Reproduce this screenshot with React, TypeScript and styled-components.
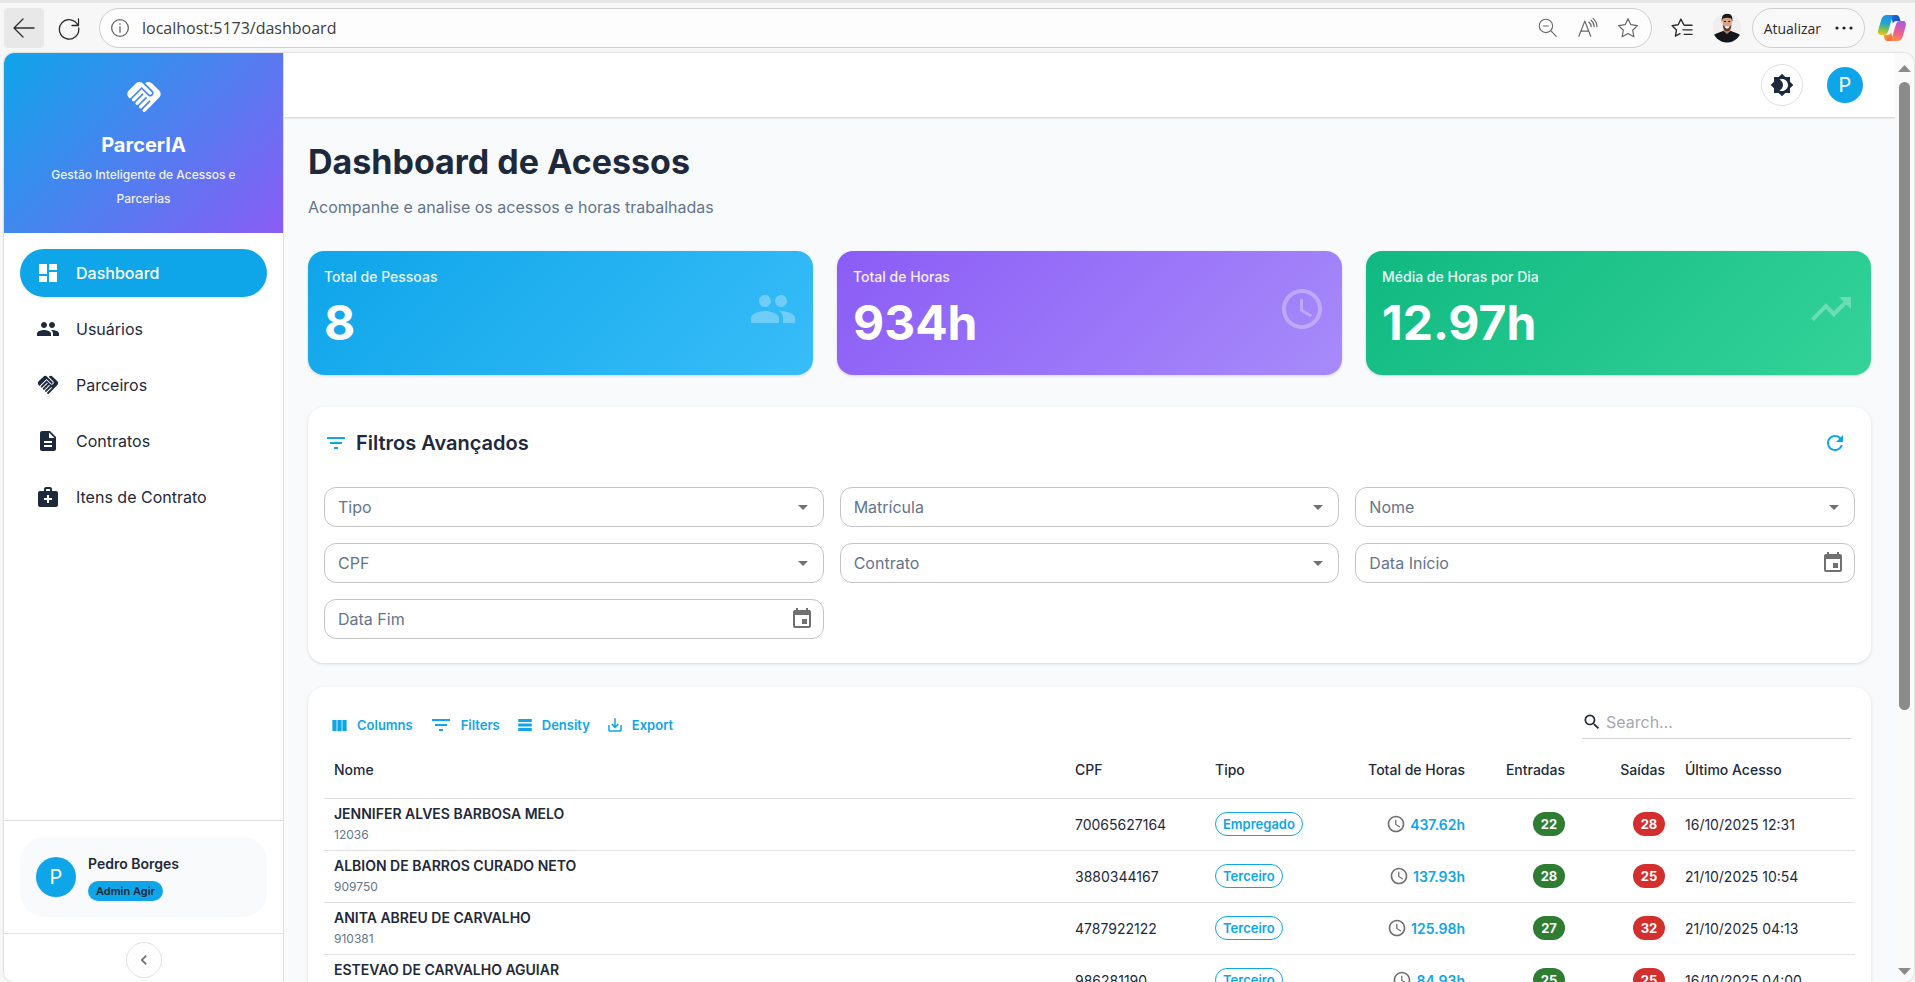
import React from 'react';
import styled, { createGlobalStyle, css } from 'styled-components';
import type { IconType } from 'react-icons';
import {
  MdAccessTime,
  MdArrowDropDown,
  MdBrightness4,
  MdChevronLeft,
  MdDashboard,
  MdDescription,
  MdEvent,
  MdFilterList,
  MdHandshake,
  MdMedicalServices,
  MdPeople,
  MdRefresh,
  MdSaveAlt,
  MdSearch,
  MdTrendingUp,
} from 'react-icons/md';

const color = {
  primary: '#0ea5e9',
  violet: '#8b5cf6',
  text: '#1e293b',
  muted: '#64748b',
  line: '#e0e0e0',
  canvas: '#f8fafc',
  chrome: '#f7f7f7',
};

const GlobalStyle = createGlobalStyle`
  *, *::before, *::after { box-sizing: border-box; }
  body {
    margin: 0;
    background: ${color.chrome};
    color: ${color.text};
    font-family: Inter, "Liberation Sans", sans-serif;
    font-size: 14px;
  }
  button, input, select { font: inherit; color: inherit; margin: 0; }
  button { cursor: pointer; }
  svg { display: block; flex: none; }
  h1, h2, p { margin: 0; }
`;

/* ---------- Browser window ---------- */

const BrowserWindow = styled.div`
  display: flex;
  flex-direction: column;
  height: 100vh;
  overflow: hidden;
`;

const BrowserBar = styled.header`
  display: flex;
  align-items: center;
  flex: none;
  height: 53px;
  padding: 0 8px 0 4px;
  border-top: 3px solid #e6e6e6;
  color: #2b2b2b;
  font-family: "Open Sans", "Noto Sans", sans-serif;
`;

const BrowserButton = styled.button<{ $active?: boolean }>`
  display: grid;
  place-items: center;
  width: 40px;
  height: 40px;
  padding: 0;
  border: 0;
  border-radius: 4px;
  background: ${(p) => (p.$active ? '#e8e8e8' : 'transparent')};
`;

const BrowserButtonGroup = styled.div`
  display: flex;
  gap: 5px;
`;

const AddressBar = styled.div`
  display: flex;
  align-items: center;
  flex: 1;
  height: 40px;
  margin: 0 10px;
  padding: 0 3px 0 10px;
  border: 1px solid #cfcfcf;
  border-radius: 20px;
  background: #fdfdfd;
  color: #666;
`;

const AddressInput = styled.input`
  flex: 1;
  min-width: 0;
  margin-left: 12px;
  padding: 0;
  border: 0;
  outline: 0;
  background: transparent;
  color: #3c3c3c;
  font-size: 16px;
`;

const UpdateButton = styled.button`
  display: flex;
  align-items: center;
  gap: 14px;
  height: 40px;
  margin: 0 12px 0 5px;
  padding: 0 11px;
  border: 1px solid #cfcfcf;
  border-radius: 20px;
  background: #f9f9f9;
  font-size: 14px;
`;

const PageFrame = styled.div`
  display: flex;
  flex: 1;
  min-height: 0;
  margin: 0 1px 0 4px;
  border-radius: 10px;
  overflow: hidden;
  background: ${color.canvas};
  box-shadow: 0 0 2px rgba(0, 0, 0, 0.3);
`;

const ScrollTrack = styled.div`
  display: flex;
  flex-direction: column;
  align-items: center;
  flex: none;
  width: 19px;
  padding: 12px 0 7px;
  background: #fafafa;
`;

const ScrollThumb = styled.div`
  width: 11px;
  height: 69%;
  margin: 10px 0 auto;
  border-radius: 6px;
  background: #8b8b8b;
`;

/* ---------- Sidebar ---------- */

const Sidebar = styled.aside`
  display: flex;
  flex-direction: column;
  flex: none;
  width: 280px;
  border-right: 1px solid ${color.line};
  background: #fff;
`;

const Brand = styled.div`
  display: flex;
  flex-direction: column;
  align-items: center;
  padding: 24px 24px 22px;
  background: linear-gradient(135deg, ${color.primary} 0%, ${color.violet} 100%);
  color: #fff;
  text-align: center;
`;

const BrandName = styled.p`
  margin: 12px 0 2px;
  font-size: 20px;
  line-height: 32px;
  font-weight: 700;
`;

const BrandTagline = styled.p`
  width: 200px;
  font-size: 12px;
  line-height: 24px;
  font-weight: 500;
  opacity: 0.9;
`;

const Nav = styled.nav`
  display: flex;
  flex-direction: column;
  flex: 1;
  gap: 8px;
  padding: 16px;
`;

const NavLink = styled.a<{ $active?: boolean }>`
  display: flex;
  align-items: center;
  gap: 16px;
  height: 48px;
  padding: 0 16px;
  border-radius: 24px;
  background: ${(p) => (p.$active ? color.primary : 'transparent')};
  color: ${(p) => (p.$active ? '#fff' : color.text)};
  font-size: 16px;
  font-weight: ${(p) => (p.$active ? 500 : 400)};
  text-decoration: none;
`;

const SidebarSection = styled.div<{ $tight?: boolean }>`
  display: flex;
  justify-content: center;
  padding: ${(p) => (p.$tight ? '8px 16px 4px' : '16px')};
  border-top: 1px solid ${color.line};
`;

const UserCard = styled.div`
  display: flex;
  align-items: center;
  flex: 1;
  gap: 12px;
  height: 80px;
  padding: 0 16px;
  border-radius: 24px;
  background: ${color.canvas};
`;

const Avatar = styled.span<{ $size: number }>`
  display: grid;
  place-items: center;
  width: ${(p) => p.$size}px;
  height: ${(p) => p.$size}px;
  border-radius: 50%;
  background: ${color.primary};
  color: #fff;
  font-size: 20px;
`;

const UserName = styled.p`
  margin-bottom: 7px;
  font-size: 14px;
  line-height: 20px;
  font-weight: 600;
`;

const RoleChip = styled.span`
  display: flex;
  align-items: center;
  width: fit-content;
  height: 20px;
  padding: 0 8px;
  border-radius: 10px;
  background: ${color.primary};
  font-size: 11px;
  font-weight: 600;
`;

const RoundButton = styled.button<{ $size: number }>`
  display: grid;
  place-items: center;
  width: ${(p) => p.$size}px;
  height: ${(p) => p.$size}px;
  padding: 0;
  border: 1px solid ${color.line};
  border-radius: 50%;
  background: #fff;
`;

/* ---------- Main area ---------- */

const Main = styled.main`
  display: flex;
  flex-direction: column;
  flex: 1;
  min-width: 0;
  overflow: hidden;
`;

const TopBar = styled.div`
  display: flex;
  align-items: center;
  justify-content: flex-end;
  flex: none;
  gap: 24px;
  height: 64px;
  padding: 0 32px;
  background: #fff;
  box-shadow: 0 1px 2px rgba(0, 0, 0, 0.18);
`;

const ProfileButton = styled.button`
  padding: 0;
  border: 0;
  background: none;
`;

const Content = styled.div`
  display: flex;
  flex-direction: column;
  padding: 24px 24px 0;
`;

const PageTitle = styled.h1`
  font-size: 34px;
  line-height: 42px;
  font-weight: 700;
`;

const PageSubtitle = styled.p`
  margin: 12px 0 32px;
  color: ${color.muted};
  font-size: 16px;
  line-height: 24px;
`;

const StatGrid = styled.section`
  display: grid;
  grid-template-columns: repeat(3, 1fr);
  gap: 24px;
  margin-bottom: 32px;
`;

const StatCard = styled.article<{ $from: string; $to: string }>`
  display: flex;
  align-items: center;
  justify-content: space-between;
  height: 124px;
  padding: 0 16px 8px;
  border-radius: 16px;
  background: linear-gradient(135deg, ${(p) => p.$from} 0%, ${(p) => p.$to} 100%);
  box-shadow: 0 1px 3px rgba(0, 0, 0, 0.14);
  color: #fff;

  svg { opacity: 0.3; }
`;

const StatLabel = styled.p`
  margin-bottom: 8px;
  font-size: 14px;
  line-height: 20px;
  font-weight: 500;
  opacity: 0.9;
`;

const StatValue = styled.p`
  font-size: 48px;
  line-height: 56px;
  font-weight: 700;
`;

const Panel = styled.section`
  margin-bottom: 24px;
  padding: 16px 16px 24px;
  border-radius: 16px;
  background: #fff;
  box-shadow: 0 1px 3px rgba(0, 0, 0, 0.14);
`;

const PanelHeader = styled.div`
  display: flex;
  align-items: center;
  justify-content: space-between;
  height: 40px;
  margin-bottom: 24px;
  color: ${color.primary};
`;

const PanelTitle = styled.h2`
  display: flex;
  align-items: center;
  gap: 8px;
  font-size: 20px;
  font-weight: 600;

  span { color: ${color.text}; }
`;

const IconButton = styled.button`
  display: grid;
  place-items: center;
  width: 40px;
  height: 40px;
  padding: 0;
  border: 0;
  background: none;
`;

const FilterGrid = styled.div`
  display: grid;
  grid-template-columns: repeat(3, 1fr);
  gap: 16px;
`;

const FieldBox = styled.div<{ $date?: boolean }>`
  display: flex;
  align-items: center;
  position: relative;
  height: 40px;

  svg {
    position: absolute;
    right: ${(p) => (p.$date ? 10 : 9)}px;
    color: #707070;
    pointer-events: none;
  }
`;

const fieldStyle = css`
  width: 100%;
  height: 40px;
  padding: 0 40px 0 13px;
  border: 1px solid #c4c4c4;
  border-radius: 12px;
  outline: 0;
  background: #fff;
  color: ${color.muted};
  font-size: 16px;
  appearance: none;
`;

const SelectField = styled.select`${fieldStyle}`;

const DateField = styled.input`
  ${fieldStyle}
  &::placeholder { color: ${color.muted}; opacity: 1; }
`;

/* ---------- Data grid ---------- */

const GridToolbar = styled.div`
  display: flex;
  align-items: flex-start;
  justify-content: space-between;
  padding-right: 4px;
`;

const ToolGroup = styled.div`
  display: flex;
  gap: 4px;
  padding: 6px 0 1px;
`;

const ToolButton = styled.button`
  display: flex;
  align-items: center;
  gap: 8px;
  height: 32px;
  padding: 0 6px;
  border: 0;
  background: none;
  color: ${color.primary};
  font-size: 13px;
  font-weight: 600;
`;

const SearchBox = styled.label`
  display: flex;
  align-items: center;
  gap: 4px;
  width: 269px;
  height: 36px;
  padding-top: 2px;
  border-bottom: 1px solid #d4d4d4;
`;

const SearchInput = styled.input`
  flex: 1;
  min-width: 0;
  padding: 0;
  border: 0;
  outline: 0;
  background: none;
  font-size: 16px;

  &::placeholder { color: #a5a8ad; opacity: 1; }
`;

const Table = styled.table`
  width: 100%;
  border-collapse: collapse;
  table-layout: fixed;
`;

const HeadCell = styled.th<{ $width?: number; $right?: boolean }>`
  width: ${(p) => (p.$width ? `${p.$width}px` : 'auto')};
  height: 56px;
  padding: 0 10px;
  border-bottom: 1px solid ${color.line};
  font-size: 14px;
  font-weight: 500;
  text-align: ${(p) => (p.$right ? 'right' : 'left')};
`;

const Cell = styled.td<{ $right?: boolean }>`
  height: 52px;
  padding: 0 10px;
  border-bottom: 1px solid ${color.line};
  font-size: 14px;
  text-align: ${(p) => (p.$right ? 'right' : 'left')};
`;

const PersonName = styled.p`
  font-size: 14px;
  line-height: 20px;
  font-weight: 600;
`;

const PersonId = styled.p`
  margin-top: 1px;
  font-size: 12px;
  line-height: 20px;
  color: ${color.muted};
`;

const TypeChip = styled.span`
  display: flex;
  align-items: center;
  width: fit-content;
  height: 24px;
  padding: 0 7px;
  border: 1px solid ${color.primary};
  border-radius: 12px;
  color: ${color.primary};
  font-size: 13px;
  font-weight: 600;
`;

const Hours = styled.span`
  display: flex;
  align-items: center;
  justify-content: flex-end;
  gap: 4px;
  color: ${color.primary};
  font-weight: 600;

  svg { color: #707070; }
`;

const CountChip = styled.span<{ $tone: 'in' | 'out' }>`
  display: flex;
  align-items: center;
  justify-content: center;
  width: 32px;
  height: 24px;
  margin-left: auto;
  border-radius: 12px;
  background: ${(p) => (p.$tone === 'in' ? '#2e7d32' : '#d32f2f')};
  color: #fff;
  font-size: 13px;
  font-weight: 700;
`;

/* ---------- Drawings ---------- */

const LineIcon = ({ d, size = 24, width = 1.3, children }: { d: string; size?: number; width?: number; children?: React.ReactNode }) => (
  <svg width={size} height={size} viewBox="0 0 24 24" fill="none" stroke="currentColor" strokeWidth={width} strokeLinecap="round" strokeLinejoin="round" aria-hidden>
    <path d={d} />
    {children}
  </svg>
);

const ColumnsIcon = () => (
  <svg width="19" height="19" viewBox="0 0 24 24" fill="currentColor" aria-hidden>
    <path d="M14.67 5v14H9.33V5zM15.67 19H21V5h-5.33zM8.33 19V5H3v14z" />
  </svg>
);

const DensityIcon = () => (
  <svg width="18" height="18" viewBox="0 0 24 24" fill="currentColor" aria-hidden>
    <path d="M21 8H3V4h18zM21 10H3v4h18zM21 16H3v4h18z" />
  </svg>
);

const ProfilePhoto = () => (
  <svg width="30" height="30" viewBox="0 0 30 30" aria-hidden>
    <defs>
      <clipPath id="photo"><circle cx="15" cy="15" r="14.5" /></clipPath>
    </defs>
    <g clipPath="url(#photo)">
      <rect width="30" height="30" fill="#f0eeee" />
      <path d="M0 30c0-6 1.500-8.500 4.500-9.500l6.500-2.500h8l6.500 2.500c3 1 4.500 3.500 4.500 9.500z" fill="#15161b" />
      <path d="M11.500 13h7v5l-3.500 3-3.500-3z" fill="#b98066" />
      <path d="M10.400 7.500c0-3 2-4.500 4.700-4.500s4.700 1.500 4.700 4.500c0 6-1.700 10.500-4.700 10.500s-4.700-4.500-4.700-10.500z" fill="#d8a387" />
      <path d="M9.800 9C9.200 3 11.500.8 15.300.8s5.700 2.400 5 8.200l-1-3.500c-2.300-1-6-1-8.500 0z" fill="#1d1715" />
      <path d="M10.700 12c.6 4 2 6.300 4.400 6.300s3.800-2.300 4.400-6.300c-.8 1.300-2 1.400-4.400 1.400s-3.600-.1-4.400-1.400z" fill="#5a3a2c" />
      <path d="M12.600 13.200h5c-.4 1.700-1.400 2.300-2.500 2.300s-2.100-.6-2.500-2.300z" fill="#fff" />
      <path d="M12 8.500h2M16.200 8.500h2" stroke="#2a1b16" strokeWidth="1" />
    </g>
  </svg>
);

const CopilotLogo = () => (
  <svg width="30" height="30" viewBox="0 0 30 30" aria-hidden>
    <defs>
      <linearGradient id="copLeft" x1="8" y1="3" x2="5" y2="22" gradientUnits="userSpaceOnUse">
        <stop offset="0" stopColor="#1f8fe8" />
        <stop offset=".4" stopColor="#28a6c9" />
        <stop offset=".7" stopColor="#7cc242" />
        <stop offset="1" stopColor="#f4c522" />
      </linearGradient>
      <linearGradient id="copTop" x1="12" y1="2" x2="22" y2="9" gradientUnits="userSpaceOnUse">
        <stop offset="0" stopColor="#1b6fe0" />
        <stop offset="1" stopColor="#1a4fc4" />
      </linearGradient>
      <linearGradient id="copRight" x1="25" y1="8" x2="18" y2="28" gradientUnits="userSpaceOnUse">
        <stop offset="0" stopColor="#a65be8" />
        <stop offset=".5" stopColor="#e8589b" />
        <stop offset="1" stopColor="#ff8a4c" />
      </linearGradient>
      <linearGradient id="copBottom" x1="8" y1="20" x2="17" y2="27" gradientUnits="userSpaceOnUse">
        <stop offset="0" stopColor="#f7a826" />
        <stop offset="1" stopColor="#f2564b" />
      </linearGradient>
    </defs>
    <path d="M14 2h5.500c1.500 0 2.400 1 2.800 2.300L23.500 8h-4c-2 0-3 1-3.600 2.800z" fill="url(#copTop)" />
    <path d="M16 28h-5.500c-1.500 0-2.400-1-2.800-2.300L6.500 22h4c2 0 3-1 3.600-2.800z" fill="url(#copBottom)" />
    <path d="M10 2h7.500c-1.400.5-1.900 1.700-2.400 3.300l-4 13.200C10.300 21 9.300 22 7 22H4.500C1.500 22 .5 20 1.300 17l3-10.500C5.200 3.500 7 2 10 2z" fill="url(#copLeft)" />
    <path d="M20 28h-7.500c1.400-.5 1.900-1.700 2.400-3.300l4-13.200c.8-2.500 1.800-3.500 4.100-3.500h2.500c3 0 4 2 3.200 5l-3 10.500c-.9 3-2.700 4.500-5.700 4.500z" fill="url(#copRight)" />
  </svg>
);

const ScrollArrow = ({ down }: { down?: boolean }) => (
  <svg width="13" height="7" viewBox="0 0 13 7" fill="#8b8b8b" aria-hidden>
    <path d={down ? 'M0 0h13L6.500 7z' : 'M0 7h13L6.500 0z'} />
  </svg>
);

/* ---------- Data ---------- */

const navItems: { label: string; icon: IconType; active?: boolean }[] = [
  { label: 'Dashboard', icon: MdDashboard, active: true },
  { label: 'Usuários', icon: MdPeople },
  { label: 'Parceiros', icon: MdHandshake },
  { label: 'Contratos', icon: MdDescription },
  { label: 'Itens de Contrato', icon: MdMedicalServices },
];

const stats: { label: string; value: string; icon: IconType; from: string; to: string }[] = [
  { label: 'Total de Pessoas', value: '8', icon: MdPeople, from: '#0ea5e9', to: '#38bdf8' },
  { label: 'Total de Horas', value: '934h', icon: MdAccessTime, from: '#8b5cf6', to: '#a78bfa' },
  { label: 'Média de Horas por Dia', value: '12.97h', icon: MdTrendingUp, from: '#10b981', to: '#34d399' },
];

const filters: { label: string; date?: boolean }[] = [
  { label: 'Tipo' },
  { label: 'Matrícula' },
  { label: 'Nome' },
  { label: 'CPF' },
  { label: 'Contrato' },
  { label: 'Data Início', date: true },
  { label: 'Data Fim', date: true },
];

const rows = [
  { name: 'JENNIFER ALVES BARBOSA MELO', id: '12036', cpf: '70065627164', type: 'Empregado', hours: '437.62h', entries: 22, exits: 28, last: '16/10/2025 12:31' },
  { name: 'ALBION DE BARROS CURADO NETO', id: '909750', cpf: '3880344167', type: 'Terceiro', hours: '137.93h', entries: 28, exits: 25, last: '21/10/2025 10:54' },
  { name: 'ANITA ABREU DE CARVALHO', id: '910381', cpf: '4787922122', type: 'Terceiro', hours: '125.98h', entries: 27, exits: 32, last: '21/10/2025 04:13' },
  { name: 'ESTEVAO DE CARVALHO AGUIAR', id: '', cpf: '986281190', type: 'Terceiro', hours: '84.93h', entries: 25, exits: 25, last: '16/10/2025 04:00' },
];

/* ---------- Page ---------- */

export default function App() {
  return (
    <BrowserWindow>
      <GlobalStyle />
      <BrowserBar>
        <BrowserButtonGroup>
          <BrowserButton $active aria-label="Voltar">
            <LineIcon d="M22 12H2M11 3L2 12l9 9" />
          </BrowserButton>
          <BrowserButton aria-label="Recarregar">
            <LineIcon d="M21 9.500A9.700 9.700 0 1 0 21.700 12M21.500 3v6.500H15" />
          </BrowserButton>
        </BrowserButtonGroup>
        <AddressBar>
          <LineIcon size={20} d="M12 10.500v6.500M12 7.200v.3" width={1.6}>
            <circle cx="12" cy="12" r="10" />
          </LineIcon>
          <AddressInput aria-label="Endereço" defaultValue="localhost:5173/dashboard" />
          <BrowserButton aria-label="Zoom">
            <LineIcon size={20} d="M15.800 15.800L22 22M6.500 9.500h6">
              <circle cx="9.500" cy="9.500" r="8" />
            </LineIcon>
          </BrowserButton>
          <BrowserButton aria-label="Ler em voz alta">
            <LineIcon size={22} d="M2 21L8.500 4.500 15 21M4.500 15.500h8M13 5.500c1.500 1.300 2.400 3 2.500 5M15.500 3.500c2 1.800 3.200 4.300 3.300 7M17.500 1.500c2.700 2.400 4.200 5.500 4.300 9" />
          </BrowserButton>
          <BrowserButton aria-label="Favoritar">
            <LineIcon size={22} d="M12 1.800l3.100 6.600 7.200 1-5.200 5 1.300 7.200L12 18.100l-6.400 3.500 1.300-7.200-5.200-5 7.200-1z" />
          </BrowserButton>
        </AddressBar>
        <BrowserButtonGroup>
          <BrowserButton aria-label="Favoritos">
            <LineIcon size={22} width={1.5} d="M14 8.500l-3.200-6.200-3 6.200-6.600 1 4.800 4.600-1.200 6.700 5-2.600M14.500 9H23M13 14H23M14.500 19H23" />
          </BrowserButton>
          <BrowserButton aria-label="Perfil">
            <ProfilePhoto />
          </BrowserButton>
        </BrowserButtonGroup>
        <UpdateButton>
          Atualizar
          <svg width="18" height="4" viewBox="0 0 18 4" fill="#222" aria-hidden>
            <circle cx="2" cy="2" r="1.6" />
            <circle cx="9" cy="2" r="1.6" />
            <circle cx="16" cy="2" r="1.6" />
          </svg>
        </UpdateButton>
        <CopilotLogo />
      </BrowserBar>

      <PageFrame>
        <Sidebar>
          <Brand>
            <MdHandshake size={40} />
            <BrandName>ParcerIA</BrandName>
            <BrandTagline>Gestão Inteligente de Acessos e Parcerias</BrandTagline>
          </Brand>
          <Nav>
            {navItems.map(({ label, icon: Icon, active }) => (
              <NavLink key={label} href="#" $active={active}>
                <Icon size={24} />
                {label}
              </NavLink>
            ))}
          </Nav>
          <SidebarSection>
            <UserCard>
              <Avatar $size={40}>P</Avatar>
              <div>
                <UserName>Pedro Borges</UserName>
                <RoleChip>Admin Agir</RoleChip>
              </div>
            </UserCard>
          </SidebarSection>
          <SidebarSection $tight>
            <RoundButton $size={36} aria-label="Recolher menu">
              <MdChevronLeft size={20} color="#6b6b6b" />
            </RoundButton>
          </SidebarSection>
        </Sidebar>

        <Main>
          <TopBar>
            <RoundButton $size={42} aria-label="Alternar tema">
              <MdBrightness4 size={24} />
            </RoundButton>
            <ProfileButton aria-label="Conta">
              <Avatar $size={36}>P</Avatar>
            </ProfileButton>
          </TopBar>

          <Content>
            <PageTitle>Dashboard de Acessos</PageTitle>
            <PageSubtitle>Acompanhe e analise os acessos e horas trabalhadas</PageSubtitle>

            <StatGrid>
              {stats.map(({ label, value, icon: Icon, from, to }) => (
                <StatCard key={label} $from={from} $to={to}>
                  <div>
                    <StatLabel>{label}</StatLabel>
                    <StatValue>{value}</StatValue>
                  </div>
                  <Icon size={48} />
                </StatCard>
              ))}
            </StatGrid>

            <Panel>
              <PanelHeader>
                <PanelTitle>
                  <MdFilterList size={24} />
                  <span>Filtros Avançados</span>
                </PanelTitle>
                <IconButton aria-label="Limpar filtros">
                  <MdRefresh size={24} />
                </IconButton>
              </PanelHeader>
              <FilterGrid>
                {filters.map(({ label, date }) => (
                  <FieldBox key={label} $date={date}>
                    {date ? (
                      <DateField type="text" placeholder={label} aria-label={label} />
                    ) : (
                      <SelectField aria-label={label} defaultValue="">
                        <option value="">{label}</option>
                      </SelectField>
                    )}
                    {date ? <MdEvent size={24} /> : <MdArrowDropDown size={24} />}
                  </FieldBox>
                ))}
              </FilterGrid>
            </Panel>

            <Panel>
              <GridToolbar>
                <ToolGroup>
                  <ToolButton><ColumnsIcon />Columns</ToolButton>
                  <ToolButton><MdFilterList size={24} />Filters</ToolButton>
                  <ToolButton><DensityIcon />Density</ToolButton>
                  <ToolButton><MdSaveAlt size={18} />Export</ToolButton>
                </ToolGroup>
                <SearchBox>
                  <MdSearch size={20} />
                  <SearchInput type="text" placeholder="Search…" aria-label="Search" />
                </SearchBox>
              </GridToolbar>
              <Table>
                <thead>
                  <tr>
                    <HeadCell>Nome</HeadCell>
                    <HeadCell $width={140}>CPF</HeadCell>
                    <HeadCell $width={140}>Tipo</HeadCell>
                    <HeadCell $width={130} $right>Total de Horas</HeadCell>
                    <HeadCell $width={100} $right>Entradas</HeadCell>
                    <HeadCell $width={100} $right>Saídas</HeadCell>
                    <HeadCell $width={180}>Último Acesso</HeadCell>
                  </tr>
                </thead>
                <tbody>
                  {rows.map((row) => (
                    <tr key={row.cpf}>
                      <Cell>
                        <PersonName>{row.name}</PersonName>
                        <PersonId>{row.id || '\u00a0'}</PersonId>
                      </Cell>
                      <Cell>{row.cpf}</Cell>
                      <Cell><TypeChip>{row.type}</TypeChip></Cell>
                      <Cell $right><Hours><MdAccessTime size={20} />{row.hours}</Hours></Cell>
                      <Cell $right><CountChip $tone="in">{row.entries}</CountChip></Cell>
                      <Cell $right><CountChip $tone="out">{row.exits}</CountChip></Cell>
                      <Cell>{row.last}</Cell>
                    </tr>
                  ))}
                </tbody>
              </Table>
            </Panel>
          </Content>
        </Main>

        <ScrollTrack>
          <ScrollArrow />
          <ScrollThumb />
          <ScrollArrow down />
        </ScrollTrack>
      </PageFrame>
    </BrowserWindow>
  );
}
